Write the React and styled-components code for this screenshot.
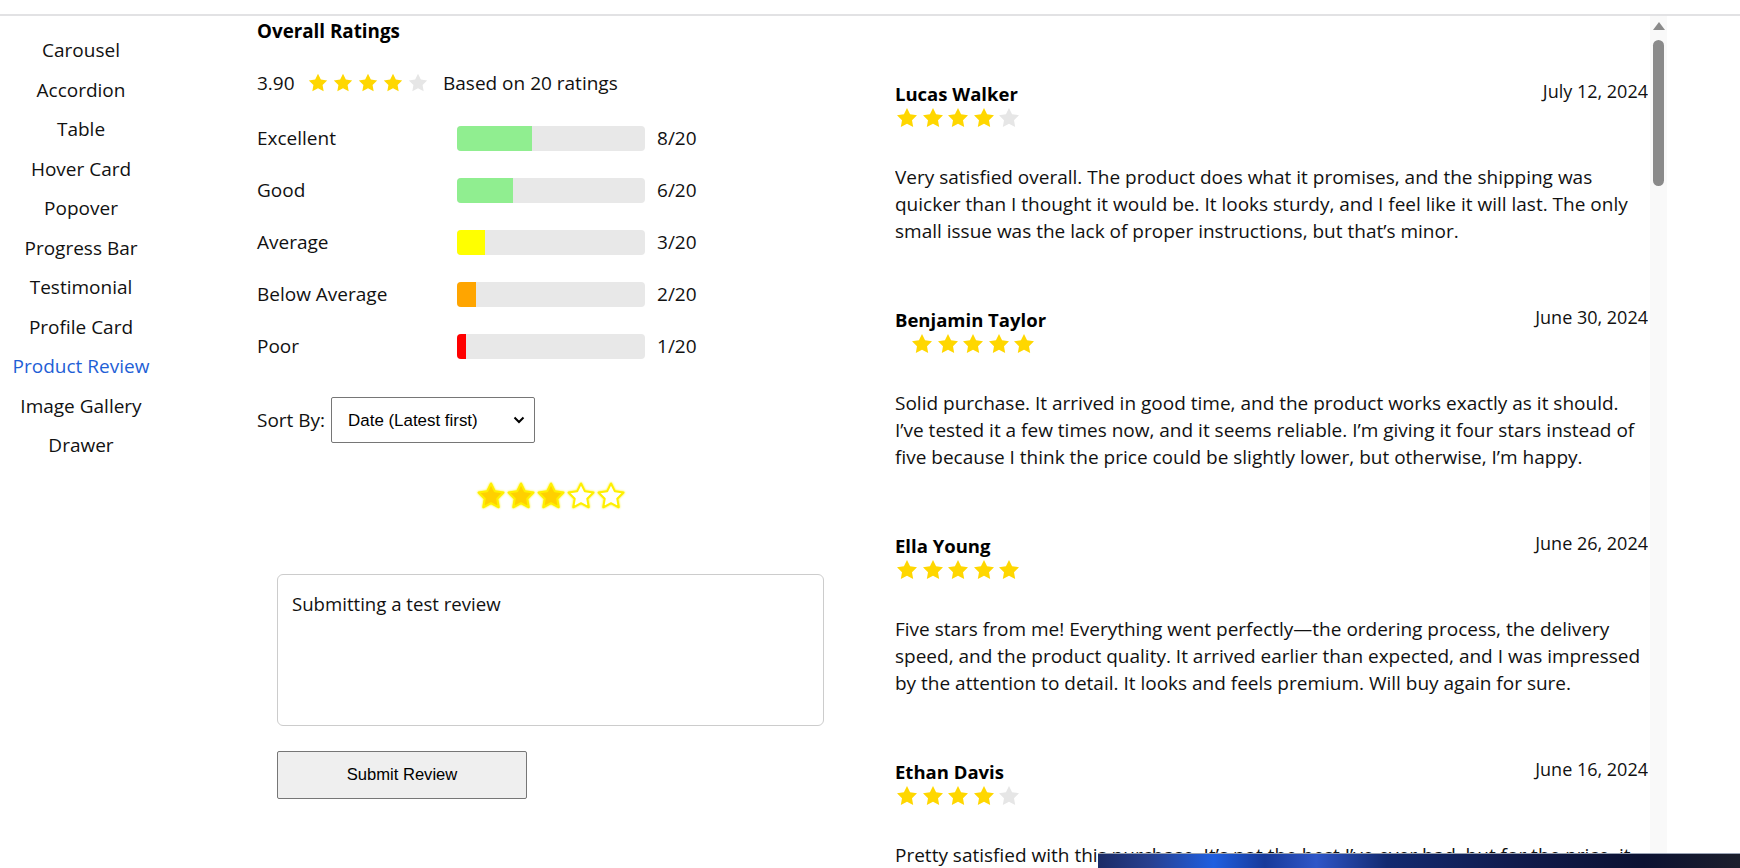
import styled, { createGlobalStyle } from 'styled-components';

const GlobalStyle = createGlobalStyle`
    html, body {
        margin: 0;
        padding: 0;
        background: #ffffff;
        font-family: "Open Sans", "Noto Sans", sans-serif;
        color: #111111;
    }
    * {
        box-sizing: border-box;
    }
`;

const Page = styled.div`
    position: relative;
    display: flex;
    flex-direction: column;
    height: 100vh;
    overflow: hidden;
`;

const TopBar = styled.div`
    flex: 0 0 16px;
    border-bottom: 2px solid #e2e2e4;
`;

const Body = styled.div`
    display: flex;
    flex: 1;
    min-height: 0;
`;

const Sidebar = styled.nav`
    width: 162px;
    padding-top: 15px;
    display: flex;
    flex-direction: column;
    align-items: center;
`;

const NavItem = styled.div`
    font-size: 19px;
    line-height: 39.5px;
    color: ${(p) => (p.$active ? '#1f5fd6' : '#111111')};
    white-space: nowrap;
`;

const Summary = styled.section`
    width: 733px;
    padding: 4px 0 0 95px;
`;

const Title = styled.h2`
    margin: 0;
    font-size: 18.8px;
    line-height: 22px;
    font-weight: 700;
    color: #000;
`;

const AverageRow = styled.div`
    display: flex;
    align-items: center;
    height: 30px;
    margin-top: 26px;
    font-size: 19px;
`;

const AverageValue = styled.span`
    width: 50px;
`;

const StarRow = styled.div`
    display: flex;
    align-items: center;
    gap: ${(p) => p.$gap}px;
    height: ${(p) => p.$height || 24}px;
    padding-left: ${(p) => p.$indent || 0}px;
`;

const BasedOn = styled.span`
    margin-left: 14px;
`;

const Bars = styled.div`
    display: flex;
    flex-direction: column;
    gap: 27px;
    margin-top: 27.5px;
`;

const BarRow = styled.div`
    display: flex;
    align-items: center;
    height: 25px;
    font-size: 19px;
`;

const BarLabel = styled.span`
    width: 200px;
`;

const BarTrack = styled.div`
    width: 188px;
    height: 25px;
    background: #e8e8e8;
    border-radius: 4px;
    overflow: hidden;
`;

const BarFill = styled.div`
    height: 100%;
    background: ${(p) => p.$color};
`;

const BarCount = styled.span`
    margin-left: 12px;
`;

const SortRow = styled.div`
    display: flex;
    align-items: center;
    margin-top: 38.5px;
    font-size: 19px;
`;

const SelectWrap = styled.div`
    position: relative;
    margin-left: 6px;
`;

const Select = styled.select`
    appearance: none;
    width: 204px;
    height: 46px;
    padding: 0 0 0 16px;
    border: 1px solid #767676;
    border-radius: 2px;
    background: #fff;
    font-family: "Liberation Sans", Arial, sans-serif;
    font-size: 16.9px;
    color: #000;
`;

const Chevron = styled.svg`
    position: absolute;
    right: 10px;
    top: 19px;
    pointer-events: none;
`;

const ReviewForm = styled.div`
    width: 567px;
    padding-left: 20px;
`;

const PickStars = styled.div`
    display: flex;
    justify-content: center;
    height: 30px;
    margin-top: 38px;
`;

const TextArea = styled.textarea`
    display: block;
    width: 547px;
    height: 152px;
    margin-top: 63px;
    padding: 16px 14px;
    border: 1px solid #cccccc;
    border-radius: 6px;
    resize: none;
    font-family: "Open Sans", "Noto Sans", sans-serif;
    font-size: 18.6px;
    line-height: 26px;
    color: #111;
`;

const SubmitButton = styled.button`
    display: block;
    width: 250px;
    height: 48px;
    margin-top: 25px;
    background: #efefef;
    border: 1px solid #767676;
    border-radius: 2px;
    font-family: "Liberation Sans", Arial, sans-serif;
    font-size: 16.6px;
    color: #000;
`;

const ReviewsPane = styled.section`
    display: flex;
    flex: 1;
    min-height: 0;
`;

const ReviewList = styled.div`
    width: 753px;
    padding-top: 66px;
    overflow: hidden;
`;

const ReviewCard = styled.article`
    margin-bottom: 63.5px;
`;

const ReviewHeader = styled.div`
    display: flex;
    justify-content: space-between;
    align-items: flex-start;
`;

const Reviewer = styled.div`
    display: flex;
    flex-direction: column;
`;

const Name = styled.span`
    font-size: 18.5px;
    line-height: 24px;
    font-weight: 700;
    color: #000;
`;

const ReviewDate = styled.span`
    font-size: 18px;
    line-height: 18px;
`;

const ReviewText = styled.p`
    margin: 33.5px 0 0;
    font-size: 19px;
    line-height: 27px;
`;

const ScrollTrack = styled.div`
    width: 17px;
    margin-left: 2px;
    background: #f9f9f9;
    display: flex;
    flex-direction: column;
    align-items: center;
    padding-top: 6px;
`;

const ScrollArrow = styled.div`
    width: 0;
    height: 0;
    border-left: 6px solid transparent;
    border-right: 6px solid transparent;
    border-bottom: 8px solid #8a8a8a;
`;

const ScrollThumb = styled.div`
    width: 11px;
    height: 146px;
    margin-top: 10px;
    border-radius: 6px;
    background: #8a8a8a;
`;

const TaskOverlay = styled.div`
    position: absolute;
    left: 1098px;
    top: 853px;
    right: 0;
    bottom: 0;
    border-top: 1px solid #9aa3b5;
    background: linear-gradient(
        90deg,
        #1b2b66 0%,
        #27408f 8%,
        #1f5fe0 18%,
        #183a9a 26%,
        #2e56c8 34%,
        #132a70 45%,
        #101b4c 65%,
        #0c1232 85%,
        #1c1f2c 100%
    );
`;

const STAR = 'M12 2l3.09 6.26L22 9.27l-5 4.87 1.18 6.88L12 17.77l-6.18 3.25L7 14.14 2 9.27l6.91-1.01L12 2z';

function Star({ size, filled }) {
    return (
        <svg width={size} height={size} viewBox="0 0 24 24">
            <path d={STAR} fill={filled ? '#ffd700' : '#e6e6e6'} />
        </svg>
    );
}

function PickStar({ filled }) {
    return (
        <svg width="30" height="30" viewBox="0 0 24 24" style={{ filter: 'drop-shadow(0 0 1px #fff200)' }}>
            <path d={STAR} fill={filled ? '#ffd000' : '#ffffff'} stroke="#ffef00" strokeWidth="1.6" strokeLinejoin="round" />
        </svg>
    );
}

function Stars({ value, size, gap, indent }) {
    return (
        <StarRow $gap={gap} $indent={indent}>
            {[1, 2, 3, 4, 5].map((n) => (
                <Star key={n} size={size} filled={n <= value} />
            ))}
        </StarRow>
    );
}

const navItems = [
    'Carousel',
    'Accordion',
    'Table',
    'Hover Card',
    'Popover',
    'Progress Bar',
    'Testimonial',
    'Profile Card',
    'Product Review',
    'Image Gallery',
    'Drawer',
];

const breakdown = [
    { label: 'Excellent', count: 8, color: '#90ee90' },
    { label: 'Good', count: 6, color: '#90ee90' },
    { label: 'Average', count: 3, color: '#ffff00' },
    { label: 'Below Average', count: 2, color: '#ffa500' },
    { label: 'Poor', count: 1, color: '#ff0000' },
];

const reviews = [
    {
        id: 1,
        name: 'Lucas Walker',
        date: 'July 12, 2024',
        rating: 4,
        text: 'Very satisfied overall. The product does what it promises, and the shipping was quicker than I thought it would be. It looks sturdy, and I feel like it will last. The only small issue was the lack of proper instructions, but that’s minor.',
    },
    {
        id: 2,
        name: 'Benjamin Taylor',
        date: 'June 30, 2024',
        rating: 5,
        indent: 15,
        text: 'Solid purchase. It arrived in good time, and the product works exactly as it should. I’ve tested it a few times now, and it seems reliable. I’m giving it four stars instead of five because I think the price could be slightly lower, but otherwise, I’m happy.',
    },
    {
        id: 3,
        name: 'Ella Young',
        date: 'June 26, 2024',
        rating: 5,
        text: 'Five stars from me! Everything went perfectly—the ordering process, the delivery speed, and the product quality. It arrived earlier than expected, and I was impressed by the attention to detail. It looks and feels premium. Will buy again for sure.',
    },
    {
        id: 4,
        name: 'Ethan Davis',
        date: 'June 16, 2024',
        rating: 4,
        text: 'Pretty satisfied with this purchase. It’s not the best I’ve ever had, but for the price, it does everything I need. Delivery was quick and the packaging was neat.',
    },
];

function App() {
    return (
        <Page>
            <GlobalStyle />
            <TopBar />
            <Body>
                <Sidebar>
                    {navItems.map((item) => (
                        <NavItem key={item} $active={item === 'Product Review'}>
                            {item}
                        </NavItem>
                    ))}
                </Sidebar>

                <Summary>
                    <Title>Overall Ratings</Title>
                    <AverageRow>
                        <AverageValue>3.90</AverageValue>
                        <Stars value={4} size={22} gap={3} />
                        <BasedOn>Based on 20 ratings</BasedOn>
                    </AverageRow>

                    <Bars>
                        {breakdown.map((row) => (
                            <BarRow key={row.label}>
                                <BarLabel>{row.label}</BarLabel>
                                <BarTrack>
                                    <BarFill $color={row.color} style={{ width: `${(row.count / 20) * 100}%` }} />
                                </BarTrack>
                                <BarCount>{row.count}/20</BarCount>
                            </BarRow>
                        ))}
                    </Bars>

                    <SortRow>
                        Sort By:
                        <SelectWrap>
                            <Select defaultValue="latest">
                                <option value="latest">Date (Latest first)</option>
                                <option value="oldest">Date (Oldest first)</option>
                                <option value="high">Rating (High to low)</option>
                            </Select>
                            <Chevron width="12" height="8" viewBox="0 0 12 8">
                                <path d="M1.5 1.5 6 6l4.5-4.5" fill="none" stroke="#000" strokeWidth="2" />
                            </Chevron>
                        </SelectWrap>
                    </SortRow>

                    <ReviewForm>
                        <PickStars>
                            {[1, 2, 3, 4, 5].map((n) => (
                                <PickStar key={n} filled={n <= 3} />
                            ))}
                        </PickStars>
                        <TextArea defaultValue="Submitting a test review" />
                        <SubmitButton>Submit Review</SubmitButton>
                    </ReviewForm>
                </Summary>

                <ReviewsPane>
                    <ReviewList>
                        {reviews.map((review) => (
                            <ReviewCard key={review.id}>
                                <ReviewHeader>
                                    <Reviewer>
                                        <Name>{review.name}</Name>
                                        <Stars value={review.rating} size={24} gap={1.5} indent={review.indent} />
                                    </Reviewer>
                                    <ReviewDate>{review.date}</ReviewDate>
                                </ReviewHeader>
                                <ReviewText>{review.text}</ReviewText>
                            </ReviewCard>
                        ))}
                    </ReviewList>
                    <ScrollTrack>
                        <ScrollArrow />
                        <ScrollThumb />
                    </ScrollTrack>
                </ReviewsPane>
            </Body>
            <TaskOverlay />
        </Page>
    );
}

export default App;
